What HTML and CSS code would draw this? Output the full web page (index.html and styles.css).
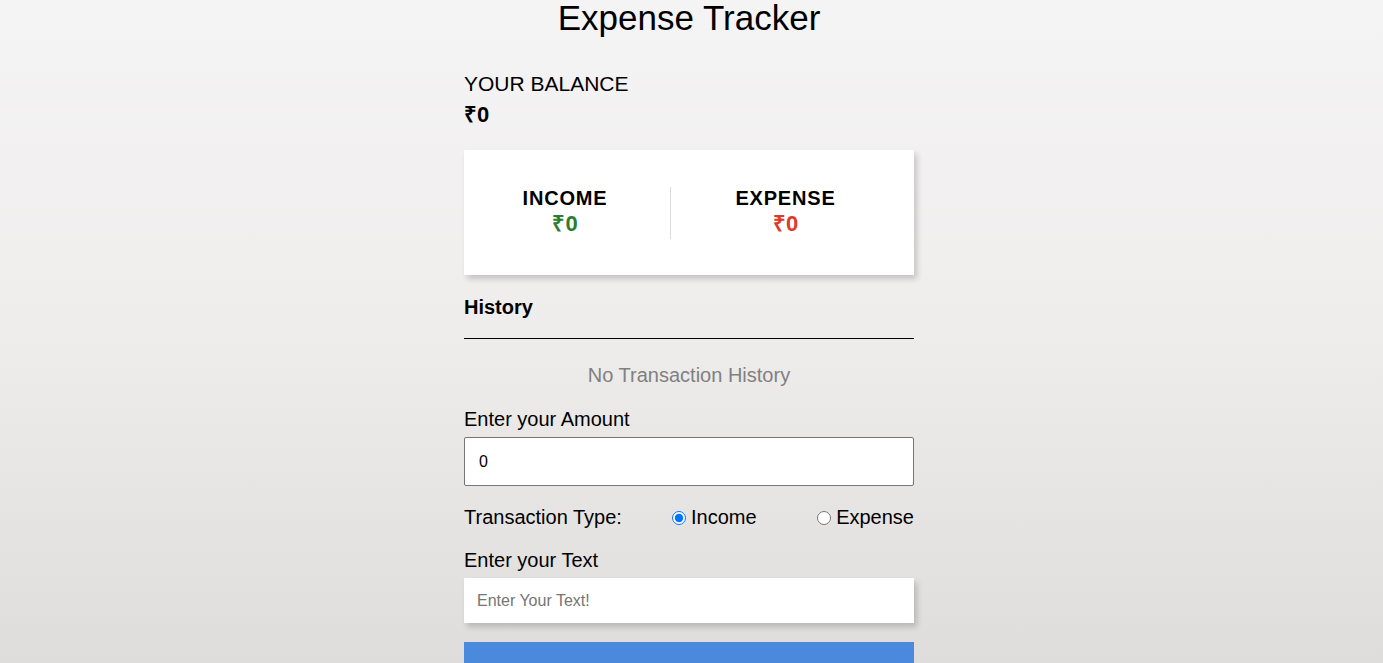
FILE: index.html
```html
<!DOCTYPE html>
<html lang="en">
<head>
<meta charset="utf-8">
<title>Expense Tracker</title>
<link rel="stylesheet" href="styles.css">
</head>
<body>
  <main class="app">
    <h1 class="title">Expense Tracker</h1>

    <section class="balance">
      <h4 class="balance-label">YOUR BALANCE</h4>
      <h2 class="balance-value">₹0</h2>
    </section>

    <section class="summary">
      <div class="summary-col summary-income">
        <h4 class="summary-label">INCOME</h4>
        <p class="money money-plus">₹0</p>
      </div>
      <div class="summary-col summary-expense">
        <h4 class="summary-label">EXPENSE</h4>
        <p class="money money-minus">₹0</p>
      </div>
    </section>

    <h3 class="history-title">History</h3>
    <hr class="history-rule">
    <p class="history-empty">No Transaction History</p>

    <form class="form">
      <label class="field-label" for="amount">Enter your Amount</label>
      <input class="amount-input" id="amount" type="number" value="0">

      <div class="type-row">
        <span class="type-label">Transaction Type:</span>
        <label class="radio-option radio-income"><input type="radio" name="type" checked>Income</label>
        <label class="radio-option radio-expense"><input type="radio" name="type">Expense</label>
      </div>

      <label class="field-label label-text" for="text">Enter your Text</label>
      <input class="text-input" id="text" type="text" placeholder="Enter Your Text!">

      <button class="submit" type="button">Add Transaction</button>
    </form>
  </main>
</body>
</html>
```

FILE: styles.css
```css
* {
  box-sizing: border-box;
}

html {
  min-height: 100%;
  background: linear-gradient(to bottom, #f5f4f5 0%, #efedec 50%, #dfdddc 100%) fixed;
}

body {
  margin: 0;
  padding-right: 5px;
  font-family: "Liberation Sans", Arial, sans-serif;
  color: #000;
}

.app {
  width: 450px;
  margin: 0 auto;
  display: flex;
  flex-direction: column;
}

.title {
  margin: 0;
  font-size: 35px;
  line-height: 35px;
  font-weight: 400;
  text-align: center;
}

.balance {
  margin-top: 37px;
  display: flex;
  flex-direction: column;
}

.balance-label {
  margin: 0;
  font-size: 21px;
  font-weight: 400;
  line-height: 24px;
}

.balance-value {
  margin: 7px 0 0;
  font-size: 22px;
  font-weight: 700;
  line-height: 24px;
}

.summary {
  margin-top: 23px;
  background: #fff;
  display: flex;
  padding: 37px 14px 36px 0;
  box-shadow: 3px 4px 6px rgba(0, 0, 0, 0.18);
}

.summary-col {
  display: flex;
  flex-direction: column;
  align-items: center;
  padding: 0 0 3px;
}

.summary-income {
  width: 207px;
  padding-right: 4px;
  border-right: 1px solid #dcdcdc;
}

.summary-expense {
  flex: 1;
}

.summary-label {
  margin: 0;
  font-size: 20px;
  line-height: 23px;
  font-weight: 700;
  letter-spacing: 0.8px;
}

.money {
  margin: 2px 0 0;
  font-size: 22px;
  line-height: 24px;
  font-weight: 700;
}

.money-plus {
  color: #2e7d2e;
}

.money-minus {
  color: #e0392b;
}

.history-title {
  margin: 21px 0 0;
  font-size: 20px;
  line-height: 23px;
  font-weight: 700;
}

.history-rule {
  margin: 19px 0 0;
  border: 0;
  border-top: 1px solid #000;
  height: 0;
}

.history-empty {
  margin: 25px 0 0;
  font-size: 20px;
  line-height: 23px;
  text-align: center;
  color: #808080;
}

.form {
  margin-top: 21px;
  display: flex;
  flex-direction: column;
}

.field-label {
  font-size: 20px;
  line-height: 23px;
}

.label-text {
  margin-top: 20px;
}

.amount-input {
  margin-top: 6px;
  height: 49px;
  width: 100%;
  padding: 0 14px;
  border: 1px solid #767676;
  border-radius: 2px;
  background: #fff;
  font-family: "Liberation Sans", Arial, sans-serif;
  font-size: 16px;
  color: #000;
}

.type-row {
  margin-top: 20px;
  display: flex;
  align-items: center;
  font-size: 20px;
  line-height: 23px;
}

.type-label {
  width: 204px;
}

.radio-option {
  display: flex;
  align-items: center;
}

.radio-option input {
  margin: 1px 5px 0 4px;
  width: 14px;
  height: 14px;
}

.radio-expense {
  margin-left: auto;
}

.text-input {
  margin-top: 6px;
  height: 45px;
  width: 100%;
  padding: 0 13px;
  border: 0;
  background: #fff;
  box-shadow: 3px 4px 6px rgba(0, 0, 0, 0.18);
  font-family: "Liberation Sans", Arial, sans-serif;
  font-size: 16px;
  color: #000;
}

.text-input::placeholder {
  color: #757575;
}

.submit {
  margin-top: 19px;
  width: 100%;
  border: 0;
  background: #4a89dc;
  color: #fff;
  font-family: "Liberation Sans", Arial, sans-serif;
  font-size: 20px;
  padding: 30px 0 14px;
}
```
